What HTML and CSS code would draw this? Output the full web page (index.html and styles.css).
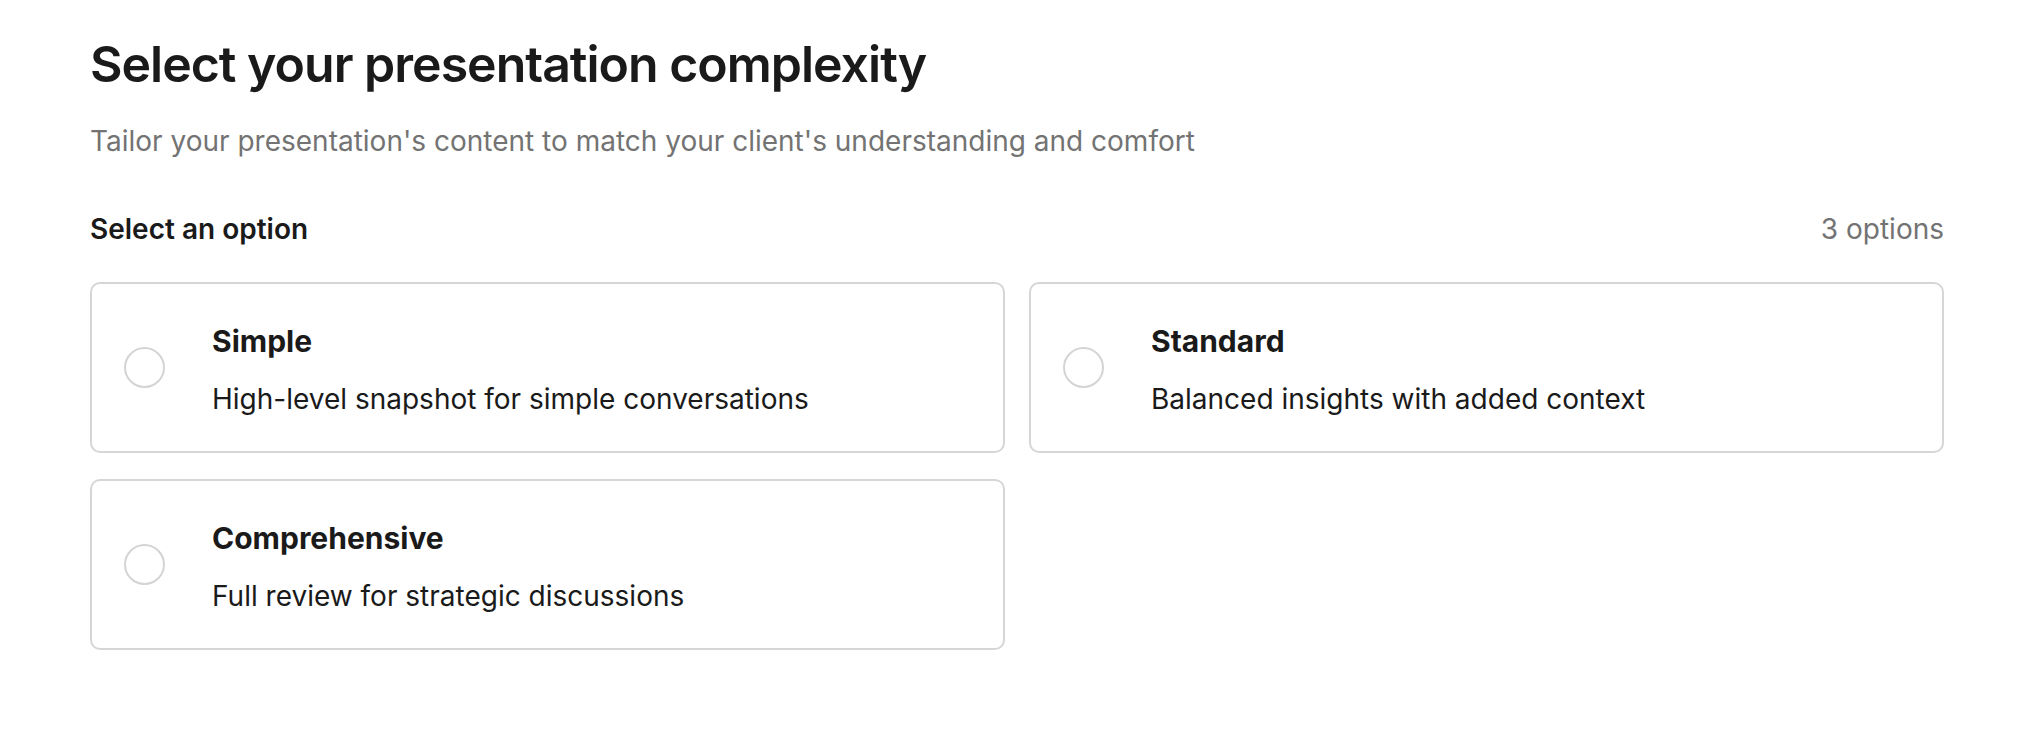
FILE: index.html
```html
<!DOCTYPE html>
<html lang="en">
<head>
    <meta charset="UTF-8">
    <meta name="viewport" content="width=device-width, initial-scale=1.0">
    <title>Presentation complexity</title>
    <link rel="stylesheet" href="styles.css">
</head>
<body>
    <div class="page">
        <h1>Select your presentation complexity</h1>
        <p class="sub">Tailor your presentation's content to match your client's understanding and comfort</p>

        <div class="head">
            <span class="label">Select an option</span>
            <span class="count">3 options</span>
        </div>

        <div class="options">
            <label class="option">
                <span class="radio"></span>
                <div class="text">
                    <h3>Simple</h3>
                    <p>High-level snapshot for simple conversations</p>
                </div>
            </label>
            <label class="option">
                <span class="radio"></span>
                <div class="text">
                    <h3>Standard</h3>
                    <p>Balanced insights with added context</p>
                </div>
            </label>
            <label class="option">
                <span class="radio"></span>
                <div class="text">
                    <h3>Comprehensive</h3>
                    <p>Full review for strategic discussions</p>
                </div>
            </label>
        </div>
    </div>
</body>
</html>
```

FILE: styles.css
```css
body{
    margin: 0;
    background: #fff;
    font-family: Inter, "Noto Sans", sans-serif;
    color: #1a1a1a;
}
.page{
    width: 1854px;
    padding: 34px 0 0 90px;
}
h1{
    margin: 0;
    font-size: 50px;
    line-height: 1.2;
    font-weight: 600;
    letter-spacing: -1px;
}
.sub{
    margin: 28px 0 0;
    font-size: 28px;
    line-height: 1.4;
    color: #737373;
}
.head{
    display: flex;
    justify-content: space-between;
    margin-top: 49px;
    font-size: 28px;
    line-height: 1.4;
}
.label{
    font-weight: 600;
}
.count{
    color: #737373;
}
.options{
    display: grid;
    grid-template-columns: 1fr 1fr;
    gap: 26px 24px;
    margin-top: 33px;
}
.option{
    display: flex;
    align-items: center;
    height: 171px;
    box-sizing: border-box;
    padding: 0 32px;
    border: 2px solid #d6d6d6;
    border-radius: 10px;
    cursor: pointer;
}
.radio{
    width: 41px;
    height: 41px;
    box-sizing: border-box;
    border: 2px solid #d4d4d4;
    border-radius: 50%;
    flex-shrink: 0;
    margin-right: 47px;
}
.text{
    margin-top: 3px;
}
.text h3{
    margin: 0;
    font-size: 30px;
    line-height: 1.4;
    font-weight: 700;
}
.text p{
    margin: 18px 0 0;
    font-size: 28px;
    line-height: 1.4;
}
```
